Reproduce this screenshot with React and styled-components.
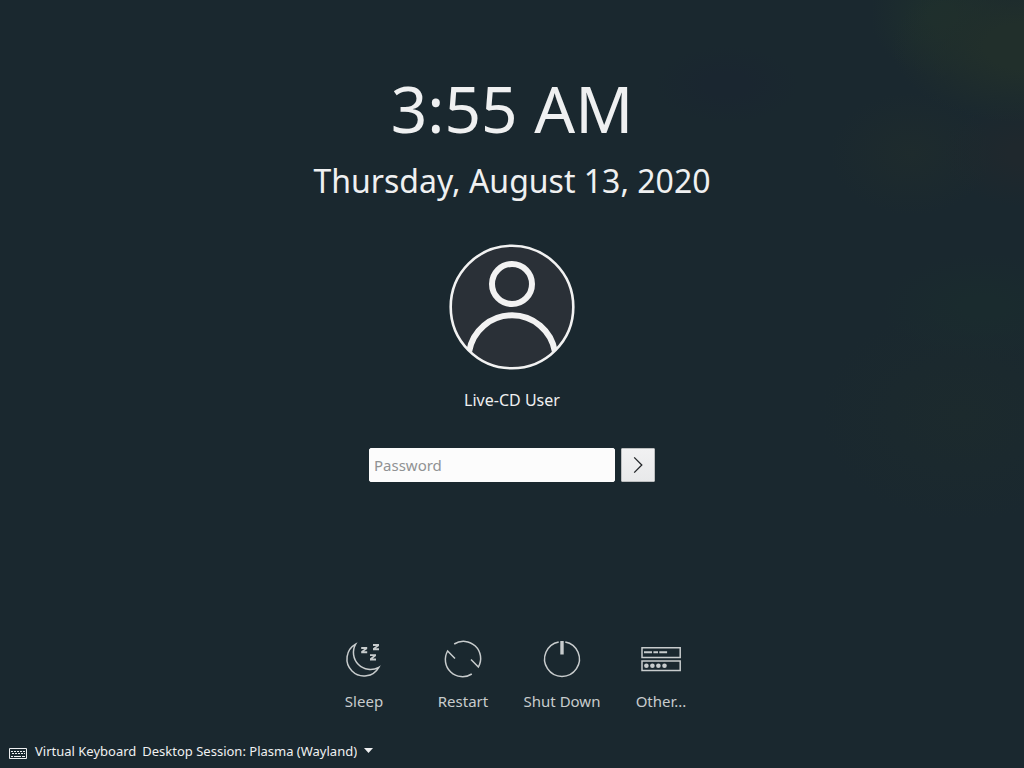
import React from "react";
import styled, { createGlobalStyle } from "styled-components";

const GlobalStyle = createGlobalStyle`
  *, *::before, *::after { box-sizing: border-box; }
  body {
    margin: 0;
    background: #1a282f;
    color: #eff0f1;
    font-family: "Noto Sans", sans-serif;
  }
  button, input, select { font: inherit; color: inherit; }
`;

const Screen = styled.div`
  min-height: 100vh;
  display: flex;
  flex-direction: column;
  background:
    radial-gradient(ellipse 13% 10% at 100% 6%, #212f2b 30%, #212f2b00 100%),
    radial-gradient(ellipse 7% 8% at 92% 2%, #1e2f2d 20%, #1e2f2d00 100%),
    radial-gradient(ellipse 8% 7% at 100% 20%, #1f282d 20%, #1f282d00 100%),
    radial-gradient(ellipse 8% 8% at 89% 20%, #1e2b2d 0%, #1e2b2d00 100%),
    radial-gradient(ellipse 7% 5% at 71% 11%, #1a2630 30%, #1a263000 100%),
    radial-gradient(ellipse 10% 7% at 96% 40%, #1a2b2e 20%, #1a2b2e00 100%),
    radial-gradient(ellipse 14% 14% at 94% 54%, #1c2a2d 0%, #1c2a2d00 100%),
    #1a282f;
`;

const Clock = styled.header`
  display: flex;
  flex-direction: column;
  align-items: center;
  gap: 6px;
  padding-top: 65px;
`;

const Time = styled.time`
  font-size: 64px;
  line-height: 88px;
`;

const CurrentDate = styled.time`
  font-size: 32px;
  line-height: 44px;
`;

const Login = styled.main`
  flex: 1;
  display: flex;
  flex-direction: column;
  align-items: center;
  padding: 41px 16px;
`;

const Avatar = styled.svg`
  display: block;
  width: 126px;
  height: 126px;
`;

const UserName = styled.h1`
  margin: 19px 0 37px;
  font-size: 16px;
  line-height: 22px;
  font-weight: 400;
`;

const PasswordForm = styled.form`
  display: flex;
  gap: 6px;
`;

const PasswordInput = styled.input`
  width: 246px;
  height: 34px;
  padding: 0 4px;
  border: 1px solid #fcfcfc;
  border-radius: 2px;
  background: #fcfcfc;
  color: #232629;
  font-size: 15px;
  outline: none;
  &::placeholder { color: #909293; opacity: 1; }
`;

const SubmitButton = styled.button`
  display: grid;
  place-items: center;
  width: 34px;
  height: 34px;
  padding: 0;
  border: 1px solid #bcbebf;
  border-radius: 1px;
  background: linear-gradient(#f1f1f2, #e8e9ea);
  color: #232629;
`;

const Actions = styled.nav`
  display: flex;
  justify-content: center;
  padding: 0 0 31px 1px;
`;

const Action = styled.button`
  display: flex;
  flex-direction: column;
  align-items: center;
  gap: 8px;
  width: 99px;
  padding: 0;
  border: 0;
  background: none;
  color: #c8cccd;
  font-size: 15px;
  line-height: 20px;
  white-space: nowrap;
`;

const ActionIcon = styled.svg`
  display: block;
  width: 48px;
  height: 48px;
  fill: none;
  stroke: currentColor;
  stroke-width: 1.5;
`;

const Footer = styled.footer`
  display: flex;
  align-items: center;
  gap: 6px;
  padding: 0 9px 8px;
  font-size: 13px;
  line-height: 18px;
`;

const KeyboardButton = styled.button`
  display: flex;
  align-items: center;
  gap: 8px;
  padding: 0;
  border: 0;
  background: none;
`;

const KeyboardIcon = styled.svg`
  display: block;
  margin-top: 4px;
`;

const SessionPicker = styled.div`
  position: relative;
`;

const SessionSelect = styled.select`
  display: block;
  appearance: none;
  height: 18px;
  padding: 0 18px 0 0;
  border: 0;
  background: none;
  outline: none;
  option { color: #232629; }
`;

const Caret = styled.svg`
  position: absolute;
  right: 2px;
  top: 6px;
  pointer-events: none;
`;

const zPath = (x, y) =>
  `M${x} ${y}h6v1.9l-3.2 2.4h3.2v1.9h-6v-1.9l3.2 -2.4h-3.2z`;

const actions = [
  {
    label: "Sleep",
    icon: (
      <>
        <path d="M15.6 9.2A17 17 0 1 0 38.8 32.3A17 17 0 0 1 15.6 9.2Z" />
        <path
          fill="currentColor"
          stroke="none"
          d={zPath(21.2, 12) + zPath(33, 9) + zPath(30, 19.2)}
        />
      </>
    ),
  },
  {
    label: "Restart",
    icon: <path d="M15.2 9A17.2 17.2 0 0 1 39.4 32L32 24.5M32.8 39A17.2 17.2 0 0 1 8.6 16L16 23.5" />,
  },
  {
    label: "Shut Down",
    icon: (
      <>
        <path d="M20.7 6.9A17.4 17.4 0 1 0 27.3 6.9" />
        <path strokeWidth="3.4" d="M24 6V19.5" />
      </>
    ),
  },
  {
    label: "Other...",
    icon: (
      <>
        <path d="M5 12.8H43.2V22.4H5ZM5 26.1H43.2V35.5H5Z" />
        <path strokeWidth="2" d="M7 17.3h8M16.4 17.3h4.6M22.3 17.3h7.8" />
        <g fill="currentColor" stroke="none">
          <circle cx="9.4" cy="30.7" r="2.3" />
          <circle cx="15.4" cy="30.7" r="2.3" />
          <circle cx="21.4" cy="30.7" r="2.3" />
          <circle cx="27.5" cy="30.7" r="2.3" />
        </g>
      </>
    ),
  },
];

export default function App() {
  return (
    <>
      <GlobalStyle />
      <Screen>
        <Clock>
          <Time dateTime="03:55">3:55 AM</Time>
          <CurrentDate dateTime="2020-08-13">Thursday, August 13, 2020</CurrentDate>
        </Clock>

        <Login>
          <Avatar viewBox="0 0 126 126" fill="none" stroke="#f2f2f2" aria-hidden="true">
            <clipPath id="face">
              <circle cx="63" cy="63" r="62" />
            </clipPath>
            <circle cx="63" cy="63" r="61.4" fill="#2a3037" stroke="none" />
            <circle cx="63" cy="40" r="20" strokeWidth="6" />
            <g clipPath="url(#face)">
              <path d="M20.1 107.6A43.5 43.5 0 0 1 105.9 107.6" strokeWidth="6" />
            </g>
            <circle cx="63" cy="63" r="61.3" strokeWidth="2.6" />
          </Avatar>
          <UserName>Live-CD User</UserName>
          <PasswordForm onSubmit={(e) => e.preventDefault()}>
            <PasswordInput type="password" placeholder="Password" aria-label="Password" />
            <SubmitButton type="submit" aria-label="Log in">
              <svg width="22" height="22" viewBox="0 0 22 22" fill="none" stroke="currentColor" strokeWidth="1.3" aria-hidden="true">
                <path d="M7.2 3.4L14.8 11L7.2 18.6" />
              </svg>
            </SubmitButton>
          </PasswordForm>
        </Login>

        <Actions aria-label="Power and session">
          {actions.map(({ label, icon }) => (
            <Action key={label} type="button">
              <ActionIcon viewBox="0 0 48 48" aria-hidden="true">{icon}</ActionIcon>
              {label}
            </Action>
          ))}
        </Actions>

        <Footer>
          <KeyboardButton type="button">
            <KeyboardIcon width="18" height="11" viewBox="0 0 18 11" fill="none" stroke="currentColor" aria-hidden="true">
              <path d="M.5 .5H17.5V10.5H.5Z" />
              <path strokeDasharray="2 1" d="M2 3.5H16M3 5.5H16" />
              <path d="M2 8.5h2M5 8.5h7M13 8.5h3" />
            </KeyboardIcon>
            Virtual Keyboard
          </KeyboardButton>
          <SessionPicker>
            <SessionSelect aria-label="Desktop session" defaultValue="wayland">
              <option value="wayland">Desktop Session: Plasma (Wayland)</option>
            </SessionSelect>
            <Caret width="9" height="5" viewBox="0 0 9 5" fill="currentColor" aria-hidden="true">
              <path d="M0 0H9L4.5 5Z" />
            </Caret>
          </SessionPicker>
        </Footer>
      </Screen>
    </>
  );
}
